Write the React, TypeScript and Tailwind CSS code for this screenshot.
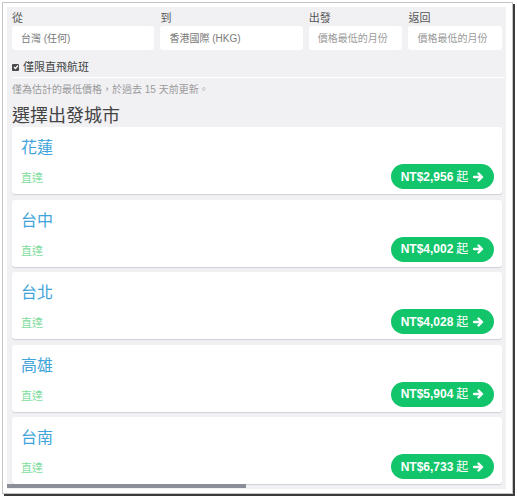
import React from "react";

const cities = [
  { name: "花蓮", price: "NT$2,956" },
  { name: "台中", price: "NT$4,002" },
  { name: "台北", price: "NT$4,028" },
  { name: "高雄", price: "NT$5,904" },
  { name: "台南", price: "NT$6,733" },
];

const font = "font-['Liberation_Sans','Noto_Sans_CJK_TC',sans-serif]";

function Arrow() {
  return (
    <svg width="11" height="10" viewBox="0 0 11 10" className="ml-[5px]">
      <path d="M1 5 H8.5 M5.5 1.5 L9 5 L5.5 8.5" stroke="white" strokeWidth="2.4" fill="none" strokeLinecap="round" strokeLinejoin="round" />
    </svg>
  );
}

function Field({ label, value, w, dark }: { label: string; value: string; w: string; dark?: boolean }) {
  return (
    <div className={`flex flex-col ${w}`}>
      <div className="text-[11px] leading-[15px] text-[#555]">{label}</div>
      <div className={`h-[24px] bg-white rounded-[3px] pl-[9px] flex items-center text-[10px] ${dark ? "text-[#7a7a7a]" : "text-[#9a9a9a]"}`}>
        {value}
      </div>
    </div>
  );
}

export default function App() {
  return (
    <div className={`w-[517px] h-[500px] bg-white pt-[2px] pl-[2px] ${font}`}>
      <div className="w-[511px] h-[492px] border border-[#c4c4c4] bg-white shadow-[2px_2px_0_#3c3c3c] pt-[4px] pl-[4px]">
        <div className="relative w-[499px] h-[482px] bg-[#f1f1f4] overflow-hidden pt-[4px] pl-[5px] pr-[4px]">
          <div className="flex gap-[6px]">
            <Field label="從" value="台灣 (任何)" w="w-[143px]" dark />
            <Field label="到" value="香港國際 (HKG)" w="w-[143px]" dark />
            <Field label="出發" value="價格最低的月份" w="w-[94px]" />
            <Field label="返回" value="價格最低的月份" w="w-[94px]" />
          </div>
          <div className="mt-[11px] flex items-center h-[12px]">
            <span className="w-[7px] h-[7px] bg-[#4a4a4a] rounded-[1px] flex items-center justify-center">
              <svg width="6" height="6" viewBox="0 0 6 6">
                <path d="M1 3 L2.5 4.5 L5 1.5" stroke="white" strokeWidth="1.2" fill="none" />
              </svg>
            </span>
            <span className="ml-[4px] text-[11px] leading-[12px] text-[#444]">僅限直飛航班</span>
          </div>
          <div className="mt-[4px] h-[1px] bg-white -mr-[3px]"></div>
          <div className="mt-[5px] text-[10px] leading-[14px] text-[#9a9a9a]">僅為估計的最低價格，於過去 15 天前更新。</div>
          <div className="mt-[8px] text-[18px] leading-[22px] text-[#444]">選擇出發城市</div>
          <div className="flex flex-col gap-[5.5px]">
            {cities.map((c) => (
              <div key={c.name} className="h-[67px] bg-white rounded-[3px] shadow-[0_1px_1px_#cfd0da] flex flex-col pl-[9px] pr-[8px] pt-[11px]">
                <div className="text-[16px] leading-[20px] text-[#3fa4d9]">{c.name}</div>
                <div className="mt-[6px] flex justify-between h-[25px]">
                  <span className="self-end mb-[4px] text-[11px] leading-[14px] text-[#7fdc9d]">直達</span>
                  <div className="w-[103px] h-[25px] rounded-full bg-[#12c56a] flex items-center justify-center text-white text-[12px] font-bold">
                    <span>{c.price}</span>
                    <span className="ml-[3px] font-normal">起</span>
                    <Arrow />
                  </div>
                </div>
              </div>
            ))}
          </div>
          <div className="absolute left-0 bottom-[1px] h-[4px] w-[239px] bg-[#8b8e99]"></div>
        </div>
      </div>
    </div>
  );
}
